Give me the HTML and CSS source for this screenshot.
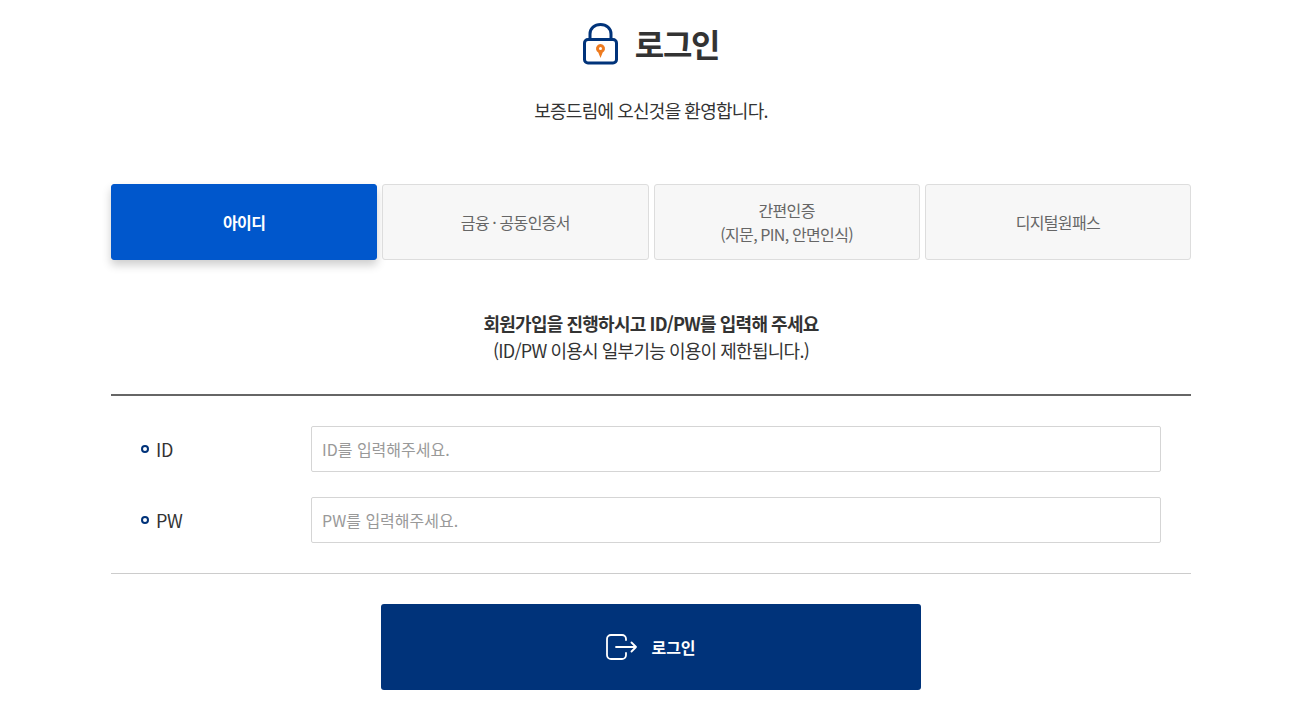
FILE: index.html
```html
<!DOCTYPE html>
<html lang="ko">
<head>
<meta charset="utf-8">
<title>로그인</title>
<link rel="stylesheet" href="styles.css">
</head>
<body>
<main class="page">
  <h1 class="title">
    <svg class="lock" width="35" height="42" viewBox="0 0 35 42" fill="none">
      <path d="M7 17V11C7 5.500 11.500 1.500 17.500 1.500S28 5.500 28 11V17" stroke="#00337a" stroke-width="3"/>
      <rect x="1.500" y="16.500" width="32" height="23.500" rx="3.500" stroke="#00337a" stroke-width="3" fill="#fff"/>
      <path d="M17.500 35l-2.200-5.500a4.500 4.500 0 1 1 4.400 0z" fill="#ee7b1f"/>
      <circle cx="17.500" cy="25.500" r="1.500" fill="#fff"/>
    </svg>
    <span class="title-text">로그인</span>
  </h1>
  <p class="welcome">보증드림에 오신것을 환영합니다.</p>
  <div class="tabs">
    <div class="tab active">아이디</div>
    <div class="tab">금융 · 공동인증서</div>
    <div class="tab">간편인증<br>(지문, PIN, 안면인식)</div>
    <div class="tab">디지털원패스</div>
  </div>
  <div class="notice">
    <strong>회원가입을 진행하시고 ID/PW를 입력해 주세요</strong><br>
    (ID/PW 이용시 일부기능 이용이 제한됩니다.)
  </div>
  <form class="form">
    <div class="row">
      <label class="label" for="id"><i class="dot"></i>ID</label>
      <input class="input" id="id" type="text" placeholder="ID를 입력해주세요.">
    </div>
    <div class="row">
      <label class="label" for="pw"><i class="dot"></i>PW</label>
      <input class="input" id="pw" type="text" placeholder="PW를 입력해주세요.">
    </div>
  </form>
  <button class="submit" type="button">
    <svg width="31" height="26" viewBox="0 0 31 26" fill="none" stroke="#fff" stroke-width="1.800" stroke-linecap="round" stroke-linejoin="round">
      <path d="M20 6V5a4 4 0 0 0-4-4H5a4 4 0 0 0-4 4v16a4 4 0 0 0 4 4h11a4 4 0 0 0 4-4v-2"/>
      <path d="M10 13h20M25.500 8.500l4.500 4.500-4.500 4.500"/>
    </svg>
    <span>로그인</span>
  </button>
</main>
</body>
</html>
```
FILE: styles.css
```css
* { box-sizing: border-box; }
html, body { margin: 0; padding: 0; background: #fff; }
body { font-family: "Noto Sans CJK KR", "Noto Sans", sans-serif; color: #333; overflow: hidden; }
.page { width: 1080px; margin-left: 111px; display: flex; flex-direction: column; }
.title { margin: 21px 0 0; height: 46px; display: flex; align-items: center; justify-content: center; gap: 17px; font-size: 32px; font-weight: 700; line-height: 44px; color: #333; letter-spacing: -0.04em; }
.title-text { margin-bottom: 3px; }
.lock { display: block; }
.welcome { margin: 30px 0 0; text-align: center; font-size: 18px; line-height: 26px; letter-spacing: -0.04em; word-spacing: -0.5px; }
.tabs { margin-top: 61px; display: grid; grid-template-columns: repeat(4, 1fr); gap: 5px; }
.tab { height: 76px; display: flex; align-items: center; justify-content: center; text-align: center; background: #f7f7f7; border: 1px solid #ddd; border-radius: 3px; font-size: 16px; line-height: 24px; color: #666; letter-spacing: -0.04em; word-spacing: -0.5px; }
.tab.active { background: #0057cc; border-color: #0057cc; color: #fff; font-weight: 700; box-shadow: 0 5px 10px rgba(0,0,0,.2); }
.notice { margin-top: 50px; text-align: center; font-size: 18px; line-height: 27px; letter-spacing: -0.04em; word-spacing: -0.5px; padding-bottom: 30px; border-bottom: 2px solid #666; }
.notice strong { font-weight: 700; }
.form { padding: 30px; border-bottom: 1px solid #ccc; display: flex; flex-direction: column; gap: 25px; }
.row { display: flex; align-items: center; }
.label { width: 170px; display: flex; align-items: center; font-size: 18px; letter-spacing: -0.02em; }
.dot { width: 8px; height: 8px; border: 2.500px solid #00337a; border-radius: 50%; margin-right: 7px; }
.input { flex: 1; height: 46px; padding: 0 10px; border: 1px solid #d5d5d5; border-radius: 2px; font: inherit; font-size: 16px; outline: none; }
.input::placeholder { color: #999; opacity: 1; }
.submit { margin: 30px auto 0; width: 540px; height: 86px; border: 0; border-radius: 3px; background: #00337a; color: #fff; display: flex; align-items: center; justify-content: center; gap: 14px; font: inherit; font-size: 16px; font-weight: 700; }
```
